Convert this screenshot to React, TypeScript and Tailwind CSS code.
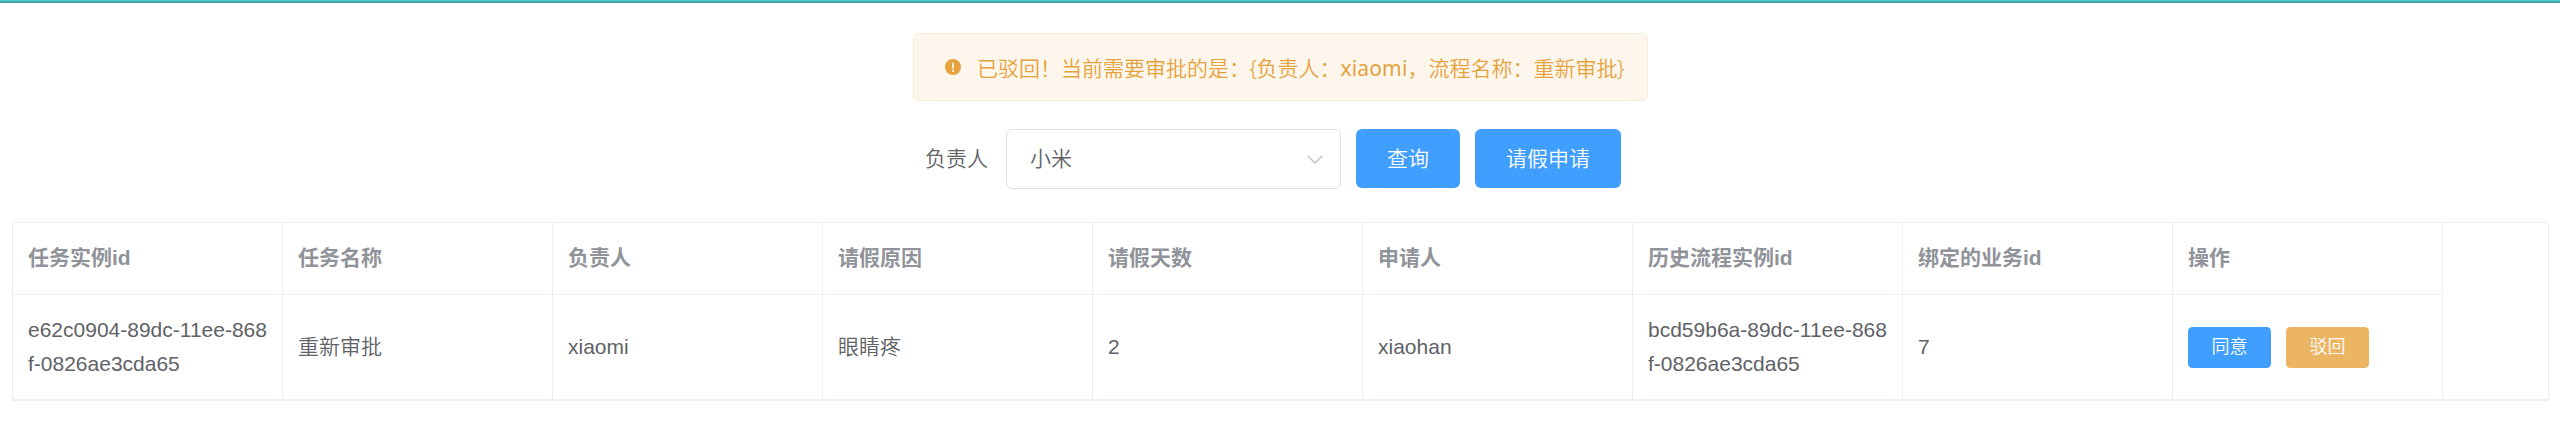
import type { ReactNode } from 'react';

const headers = ['任务实例id', '任务名称', '负责人', '请假原因', '请假天数', '申请人', '历史流程实例id', '绑定的业务id', '操作'];

const values = [
  'e62c0904-89dc-11ee-868f-0826ae3cda65',
  '重新审批',
  'xiaomi',
  '眼睛疼',
  '2',
  'xiaohan',
  'bcd59b6a-89dc-11ee-868f-0826ae3cda65',
  '7',
];

function Button({ className, children }: { className: string; children: ReactNode }) {
  return (
    <button className={`flex shrink-0 items-center justify-center whitespace-nowrap text-white ${className}`}>
      {children}
    </button>
  );
}

function WarningIcon() {
  return (
    <svg className="h-4 w-4 shrink-0" viewBox="0 0 16 16">
      <circle cx="8" cy="8" r="8" fill="#e6a23c" />
      <path d="M8 4.4v4.4" stroke="#fdf6ec" strokeWidth="1.8" strokeLinecap="round" />
      <circle cx="8" cy="11.9" r="1.1" fill="#fdf6ec" />
    </svg>
  );
}

export default function App() {
  return (
    <div className="flex h-[440px] w-[2560px] flex-col overflow-hidden bg-white font-['Liberation_Sans','Noto_Sans_CJK_SC',sans-serif] text-[21px] font-[350] text-[#606266]">
      <div className="h-[3px] shrink-0 border-t border-[#4ecbcb] bg-[#47a5a6]" />

      <div className="mt-[30px] ml-[913px] flex h-[68px] w-[735px] shrink-0 items-center rounded-md border border-[#faecd0] bg-[#fdf6ec] pl-[31px] font-['Noto_Sans','Noto_Sans_CJK_SC',sans-serif] text-[#e6a23c]">
        <WarningIcon />
        <p className="ml-4 flex whitespace-nowrap pt-0.5 leading-[30px]">
          <span>已驳回！当前需要审批的是：</span>
          <span className="flex w-[6.5px] justify-center">{'{'}</span>
          <span>负责人：</span>
          <span className="w-[67px] font-normal tracking-[0.15px]">xiaomi</span>
          <span>，流程名称：重新审批</span>
          <span className="flex w-[6.5px] justify-center">{'}'}</span>
        </p>
      </div>

      <div className="mt-7 ml-[925px] flex h-[60px] shrink-0 items-start">
        <span className="w-[81px] leading-[60px]">负责人</span>
        <div className="flex h-[60px] w-[335px] items-center justify-between rounded-md border border-[#dcdfe6] pr-[17px] pl-[23px]">
          <span>小米</span>
          <svg className="h-[9px] w-4" viewBox="0 0 16 9" fill="none" stroke="#c0c4cc" strokeWidth="1.4">
            <path d="M0.6 0.7 8 8l7.4-7.3" />
          </svg>
        </div>
        <Button className="ml-[15px] h-[59px] w-[104px] rounded-md bg-[#409eff]">查询</Button>
        <Button className="ml-[15px] h-[59px] w-[146px] rounded-md bg-[#409eff]">请假申请</Button>
      </div>

      <div className="mt-[33px] ml-3 flex h-[179px] w-[2537px] shrink-0 border border-b-2 border-[#ebeef5]">
        <div className="grid grid-cols-[repeat(9,270px)] grid-rows-[72px_104px]">
          {headers.map((header) => (
            <div key={header} className="flex items-center border-r border-b border-[#ebeef5] px-[15px] pb-0.5 font-bold text-[#909399]">
              {header}
            </div>
          ))}
          {values.map((value, index) => (
            <div key={index} className="flex items-center border-r border-[#ebeef5] px-[15px] leading-[34px]">
              <span className="min-w-0 break-all">{value}</span>
            </div>
          ))}
          <div className="flex items-center gap-[15px] border-r border-[#ebeef5] px-[15px] text-lg">
            <Button className="h-[41px] w-[83px] rounded-[4.5px] bg-[#409eff]">同意</Button>
            <Button className="h-[41px] w-[83px] rounded-[4.5px] bg-[#ebb563]">驳回</Button>
          </div>
        </div>
      </div>
    </div>
  );
}
